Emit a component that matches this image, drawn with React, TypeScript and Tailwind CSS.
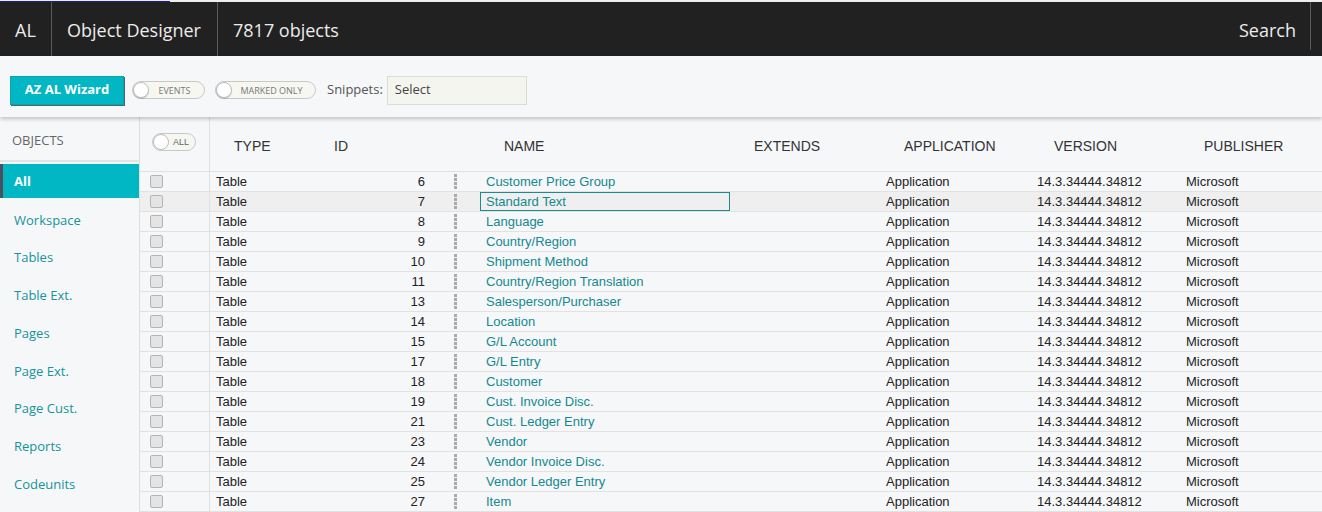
import React from 'react';

interface Row {
  id: number;
  name: string;
}

const rows: Row[] = [
  { id: 6, name: 'Customer Price Group' },
  { id: 7, name: 'Standard Text' },
  { id: 8, name: 'Language' },
  { id: 9, name: 'Country/Region' },
  { id: 10, name: 'Shipment Method' },
  { id: 11, name: 'Country/Region Translation' },
  { id: 13, name: 'Salesperson/Purchaser' },
  { id: 14, name: 'Location' },
  { id: 15, name: 'G/L Account' },
  { id: 17, name: 'G/L Entry' },
  { id: 18, name: 'Customer' },
  { id: 19, name: 'Cust. Invoice Disc.' },
  { id: 21, name: 'Cust. Ledger Entry' },
  { id: 23, name: 'Vendor' },
  { id: 24, name: 'Vendor Invoice Disc.' },
  { id: 25, name: 'Vendor Ledger Entry' },
  { id: 27, name: 'Item' },
];

const menu = [
  'Workspace',
  'Tables',
  'Table Ext.',
  'Pages',
  'Page Ext.',
  'Page Cust.',
  'Reports',
  'Codeunits',
];

const cols = 'grid grid-cols-[70px_100px_120px_50px_250px_150px_150px_150px_1fr]';

function Toggle({ label, width }: { label: string; width: string }) {
  return (
    <div
      className={`flex items-center h-[18px] ${width} rounded-full border border-[#c8c8c8] bg-[#f7f7f2]`}
    >
      <span className="w-[16px] h-[16px] rounded-full bg-white border border-[#bdbdbd] shadow-[0_1px_1px_rgba(0,0,0,0.15)]" />
      <span className="flex-1 text-center text-[9px] leading-none text-[#777] uppercase pr-[4px]">
        {label}
      </span>
    </div>
  );
}

function Handle() {
  return (
    <div className="flex flex-col gap-[1px] items-center">
      <span className="w-[3px] h-[3px] bg-[#aaa]" />
      <span className="w-[3px] h-[3px] bg-[#aaa]" />
      <span className="w-[3px] h-[3px] bg-[#aaa]" />
      <span className="w-[3px] h-[3px] bg-[#aaa]" />
    </div>
  );
}

export default function App() {
  return (
    <div className="w-[1322px] h-[512px] overflow-hidden bg-[#f6f7f9] flex flex-col font-['Open_Sans',sans-serif]">
      {/* loading strip */}
      <div className="h-[2px] bg-[#eeeeee] flex flex-col">
        <div className="mt-[1px] h-[1px] w-[170px] bg-[#1c1ca8]" />
      </div>

      {/* title bar */}
      <header className="h-[54px] bg-[#212121] flex items-stretch text-[#ececec] text-[18px]">
        <div className="w-[52px] flex items-center pl-[15px] pt-[2px] border-r border-[#5a5a5a]">AL</div>
        <div className="w-[166px] flex items-center pl-[15px] pt-[2px] border-r border-[#5a5a5a]">
          Object Designer
        </div>
        <div className="flex items-center pl-[15px] pt-[2px]">7817 objects</div>
        <div className="ml-auto flex items-center pt-[2px]">Search</div>
        <div className="self-start h-[48px] w-px bg-[#5a5a5a] ml-[14px] mr-[11px]" />
      </header>

      {/* toolbar */}
      <div className="relative z-10 h-[61px] bg-[#f6f7f9] shadow-[0_2px_4px_rgba(0,0,0,0.22)] flex items-center pl-[10px] pt-[7px]">
        <button className="h-[29px] w-[114px] bg-[#00b7c3] border border-[#0aa3ad] shadow-[1px_1px_0_#4a6a70] text-white text-[13px] font-bold">
          AZ AL Wizard
        </button>
        <div className="ml-[8px]">
          <Toggle label="Events" width="w-[73px]" />
        </div>
        <div className="ml-[10px]">
          <Toggle label="Marked only" width="w-[101px]" />
        </div>
        <span className="ml-[11px] text-[13px] text-[#555]">Snippets:</span>
        <div className="ml-[4px] h-[29px] w-[140px] bg-[#f5f5ef] border border-[#dcdcd6] flex items-center pl-[7px] text-[13px] text-[#444]">
          Select
        </div>
      </div>

      {/* main */}
      <div className="flex-1 flex min-h-0">
        <aside className="w-[140px] shrink-0 border-r border-[#dedede] flex flex-col">
          <div className="h-[45px] shrink-0 flex items-center pl-[12px] pt-[5px] border-b-2 border-[#e3e3e3] text-[13px] text-[#666]">
            OBJECTS
          </div>
          <div className="mt-[2px] h-[34px] shrink-0 flex items-center bg-[#00b7c3] border-l-[3px] border-[#4c4f5e] pl-[11px] pt-[1px] text-white font-bold text-[13px]">
            All
          </div>
          <div className="mt-[3px] flex flex-col">
            {menu.map((m) => (
              <div key={m} className="h-[37.75px] shrink-0 flex items-center pl-[14px] pt-[1px] text-[13px] text-[#14949b]">
                {m}
              </div>
            ))}
          </div>
        </aside>

        <section className="flex-1 flex flex-col font-['Liberation_Sans',Arial,sans-serif]">
          <div className={`${cols} h-[55px] shrink-0 border-b border-[#e0e0e0] text-[14px] text-[#333]`}>
            <div className="border-r border-[#e0e0e0] pl-[12px] pt-[16px]">
              <div className="flex items-center h-[18px] w-[44px] rounded-full border border-[#c8c8c8] bg-[#f7f7f2]">
                <span className="w-[16px] h-[16px] rounded-full bg-white border border-[#bdbdbd]" />
                <span className="ml-[4px] text-[9px] leading-none text-[#666]">ALL</span>
              </div>
            </div>
            <div className="pl-[24px] pt-[19px]">TYPE</div>
            <div className="pl-[24px] pt-[19px]">ID</div>
            <div />
            <div className="pl-[24px] pt-[19px]">NAME</div>
            <div className="pl-[24px] pt-[19px]">EXTENDS</div>
            <div className="pl-[24px] pt-[19px]">APPLICATION</div>
            <div className="pl-[24px] pt-[19px]">VERSION</div>
            <div className="pl-[24px] pt-[19px]">PUBLISHER</div>
          </div>

          {rows.map((r, i) => {
            const selected = i === 1;
            return (
              <div
                key={r.id}
                className={`${cols} h-[20px] shrink-0 border-b border-[#e2e2e2] text-[13px] leading-[16px] text-[#222] ${
                  selected ? 'bg-[#efefef]' : ''
                }`}
              >
                <div className="border-r border-[#e0e0e0] flex items-center pl-[10px]">
                  <span className="w-[13px] h-[13px] rounded-[2px] border border-[#b4b4b4] bg-[#e4e4e4]" />
                </div>
                <div className="flex items-center pl-[6px]">Table</div>
                <div className="flex items-center justify-end pr-[5px]">{r.id}</div>
                <div className="flex items-center justify-center">
                  <Handle />
                </div>
                <div
                  className={`flex items-center pl-[5px] text-[#14898f] ${
                    selected ? 'border border-[#1b8b91]' : 'border border-transparent'
                  }`}
                >
                  {r.name}
                </div>
                <div />
                <div className="flex items-center pl-[6px]">Application</div>
                <div className="flex items-center pl-[7px]">14.3.34444.34812</div>
                <div className="flex items-center pl-[6px]">Microsoft</div>
              </div>
            );
          })}
        </section>
      </div>
    </div>
  );
}
